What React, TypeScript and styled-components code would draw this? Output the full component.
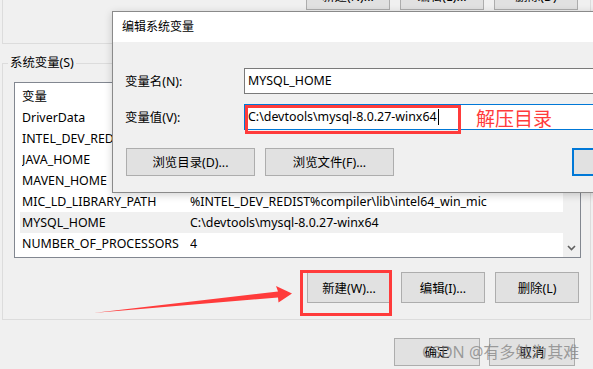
import React from "react"
import styled, { createGlobalStyle } from "styled-components"

const GlobalStyle = createGlobalStyle`
  html, body {
    margin: 0;
    padding: 0;
  }
  body {
    background: #f0f0f0;
    font-family: "Noto Sans", "Noto Sans CJK SC", sans-serif;
    font-size: 12.4px;
  }
`

const rows = [
  { name: "DriverData", value: "C:\\Windows\\System32\\Drivers\\DriverData" },
  { name: "INTEL_DEV_REDIST", value: "C:\\Program Files (x86)\\Common Files\\Intel\\Shared Libraries\\" },
  { name: "JAVA_HOME", value: "C:\\devtools\\jdk1.8.0_221" },
  { name: "MAVEN_HOME", value: "C:\\devtools\\apache-maven-3.6.3" },
  { name: "MIC_LD_LIBRARY_PATH", value: "%INTEL_DEV_REDIST%compiler\\lib\\intel64_win_mic" },
  { name: "MYSQL_HOME", value: "C:\\devtools\\mysql-8.0.27-winx64", selected: true },
  { name: "NUMBER_OF_PROCESSORS", value: "4" },
]

export default function App() {
  return (
    <Screen>
      <GlobalStyle />
      <TopGroup>
        <ButtonRow>
          <WinButton>新建(N)...</WinButton>
          <WinButton>编辑(E)...</WinButton>
          <WinButton>删除(D)</WinButton>
        </ButtonRow>
      </TopGroup>

      <GroupBox>
        <Legend>系统变量(S)</Legend>
        <ListBox>
          <Rows>
            <Row>
              <Cell>变量</Cell>
              <Cell>值</Cell>
            </Row>
            {rows.map((r) => (
              <Row key={r.name} selected={r.selected}>
                <Cell>{r.name}</Cell>
                <Cell>{r.value}</Cell>
              </Row>
            ))}
          </Rows>
          <ScrollBar>
            <svg width="9" height="6" viewBox="0 0 9 6">
              <path d="M1 1 L4.5 4.5 L8 1" fill="none" stroke="#606060" strokeWidth="1.6" />
            </svg>
          </ScrollBar>
        </ListBox>
        <ButtonRow>
          <WinButton tall>新建(W)...</WinButton>
          <WinButton tall>编辑(I)...</WinButton>
          <WinButton tall>删除(L)</WinButton>
        </ButtonRow>
      </GroupBox>

      <FooterRow>
        <WinButton wide>确定</WinButton>
        <WinButton wide>取消</WinButton>
      </FooterRow>

      <Dialog>
        <TitleBar>编辑系统变量</TitleBar>
        <DialogBody>
          <FieldRow>
            <FieldLabel>变量名(N):</FieldLabel>
            <TextBox>MYSQL_HOME</TextBox>
          </FieldRow>
          <FieldRow spaced>
            <FieldLabel>变量值(V):</FieldLabel>
            <TextBox focused>
              C:\devtools\mysql-8.0.27-winx64
              <Caret />
            </TextBox>
          </FieldRow>
          <DialogButtons>
            <WinButton browse>浏览目录(D)...</WinButton>
            <WinButton browse>浏览文件(F)...</WinButton>
            <WinButton wide primary>确定</WinButton>
          </DialogButtons>
        </DialogBody>
      </Dialog>

      <MarkBox style={{ left: 245, top: 105, width: 216, height: 29 }} />
      <MarkBox style={{ left: 300, top: 270, width: 92, height: 46 }} />
      <MarkText>解压目录</MarkText>
      <Arrow width="593" height="369" viewBox="0 0 593 369">
        <polygon
          points="93,313 278,291.5 276,286 292,293.5 278.5,302.5 278,297.5"
          fill="#ff3b3b"
        />
      </Arrow>
      <Watermark>CSDN @有多勉为其难</Watermark>
    </Screen>
  )
}

const Screen = styled.div`
  position: relative;
  width: 593px;
  height: 369px;
  overflow: hidden;
  background: #f0f0f0;
  color: #000;
`

const TopGroup = styled.div`
  display: flow-root;
  box-sizing: border-box;
  margin-left: 2px;
  width: 589px;
  height: 44px;
  border: 1px solid #dcdcdc;
  border-top: none;
  padding-right: 12px;
`

const ButtonRow = styled.div`
  display: flex;
  justify-content: flex-end;
  gap: 10px;

  ${TopGroup} & {
    margin-top: -18px;
  }
`

const WinButton = styled.div<{ tall?: boolean; wide?: boolean; browse?: boolean; primary?: boolean }>`
  box-sizing: border-box;
  flex: none;
  width: ${(p) => (p.browse ? 129 : p.wide ? 86 : 84)}px;
  height: ${(p) => (p.tall ? 31 : 28)}px;
  display: flex;
  align-items: center;
  justify-content: center;
  background: #e1e1e1;
  border: ${(p) => (p.primary ? "2px solid #0078d7" : "1px solid #adadad")};
  color: #000;
  white-space: nowrap;
  margin-left: ${(p) => (p.primary ? 168 : 0)}px;
`

const GroupBox = styled.div`
  box-sizing: border-box;
  margin-top: 19px;
  margin-left: 2px;
  width: 589px;
  height: 257px;
  border: 1px solid #dcdcdc;
  padding-right: 11px;

  ${ButtonRow} {
    margin-top: 14px;
  }
`

const Legend = styled.div`
  width: fit-content;
  margin: -8px 0 0 5px;
  padding: 0 2px;
  height: 14px;
  line-height: 14px;
  background: #f0f0f0;
`

const ListBox = styled.div`
  box-sizing: border-box;
  margin: 12px 0 0 11px;
  width: 567px;
  height: 176px;
  border: 1px solid #828790;
  background: #fff;
  display: flex;
  overflow: hidden;
`

const Rows = styled.div`
  flex: 1;
  min-width: 0;
  padding: 3px 0 0 5px;
`

const Row = styled.div<{ selected?: boolean }>`
  display: grid;
  grid-template-columns: 168px 1fr;
  height: 21px;
  line-height: 21px;
  padding-left: 2px;
  background: ${(p) => (p.selected ? "#f0f0f0" : "transparent")};
  white-space: nowrap;
`

const Cell = styled.span`
  overflow: hidden;
`

const ScrollBar = styled.div`
  flex: none;
  width: 17px;
  background: #f0f0f0;
  display: flex;
  align-items: flex-end;
  justify-content: center;
  padding-bottom: 6px;
  box-sizing: border-box;
`

const FooterRow = styled.div`
  display: flex;
  justify-content: flex-end;
  gap: 9px;
  margin-top: 18px;
  padding-right: 18px;
`

const Dialog = styled.div`
  position: absolute;
  left: 112px;
  top: 11px;
  width: 520px;
  height: 182px;
  box-sizing: border-box;
  border: 1px solid #8a8a8a;
  background: #f0f0f0;
  box-shadow: 0 2px 8px rgba(0, 0, 0, 0.18);
`

const TitleBar = styled.div`
  height: 30px;
  line-height: 30px;
  padding-left: 9px;
  background: #fff;
  font-size: 12px;
`

const DialogBody = styled.div`
  padding: 26px 0 0 12px;
`

const FieldRow = styled.div<{ spaced?: boolean }>`
  display: flex;
  align-items: center;
  margin-top: ${(p) => (p.spaced ? 10 : 0)}px;
`

const FieldLabel = styled.div`
  width: 119px;
  flex: none;
`

const TextBox = styled.div<{ focused?: boolean }>`
  box-sizing: border-box;
  flex: none;
  width: 420px;
  height: 26px;
  line-height: 24px;
  padding-left: 3px;
  background: #fff;
  border: 1px solid ${(p) => (p.focused ? "#0078d7" : "#7a7a7a")};
  display: flex;
  align-items: center;
  white-space: nowrap;
`

const Caret = styled.span`
  display: inline-block;
  width: 1px;
  height: 16px;
  margin-left: 1px;
  background: #000;
`

const DialogButtons = styled.div`
  display: flex;
  gap: 10px;
  margin: 18px 0 0 1px;
`

const MarkBox = styled.div`
  position: absolute;
  box-sizing: border-box;
  border: 3px solid #ff3b3b;
`

const MarkText = styled.div`
  position: absolute;
  left: 476px;
  top: 105px;
  font-family: "Noto Sans CJK SC", sans-serif;
  font-size: 19px;
  line-height: 26px;
  color: #ff3b3b;
`

const Arrow = styled.svg`
  position: absolute;
  left: 0;
  top: 0;
  pointer-events: none;
`

const Watermark = styled.div`
  position: absolute;
  left: 422px;
  top: 340px;
  font-family: "Noto Sans", "Noto Sans CJK SC", sans-serif;
  font-size: 16px;
  line-height: 24px;
  color: rgba(130, 130, 130, 0.75);
  white-space: nowrap;
`
